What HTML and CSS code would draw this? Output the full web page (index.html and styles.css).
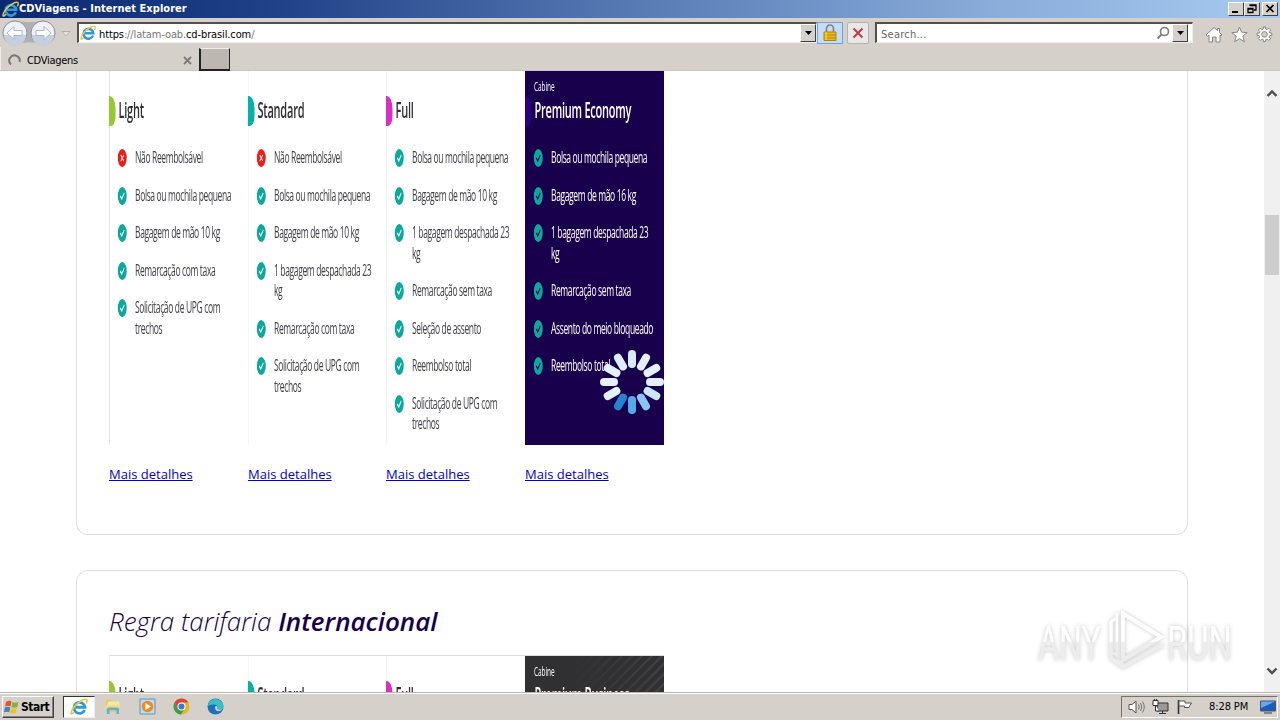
FILE: index.html
```
<!DOCTYPE html>
<html lang="pt-BR">
<head>
<meta charset="utf-8">
<title>CDViagens - Internet Explorer</title>
<link rel="stylesheet" href="styles.css">
</head>
<body>
<svg class="defs" width="0" height="0">
  <defs>
    <symbol id="ie" viewBox="0 0 16 16">
      <path d="M13 10.600A4.900 4.900 0 1 1 13.300 8.200H5" fill="none" stroke="#2d9ad8" stroke-width="2.500"/>
      <path d="M3.500 12.500C.7 16.200 0 13.400 2.600 9.300 5.800 4.300 12.400.4 14.600 1.300c1.200.6.5 2.600-.1 3.700" fill="none" stroke="#f0c545" stroke-width="1.400"/>
    </symbol>
    <symbol id="ok" viewBox="0 0 18 18"><circle cx="9" cy="9" r="9" fill="#0aa99d"/><path d="M5 9l3 3 5-6" fill="none" stroke="currentColor" stroke-width="1.8"/></symbol>
    <symbol id="no" viewBox="0 0 18 18"><circle cx="9" cy="9" r="9" fill="#ec1c16"/><path d="M6 6l6 6M12 6l-6 6" fill="none" stroke="#fff" stroke-width="1.5"/></symbol>
  </defs>
</svg>
<div class="window">
  <header class="titlebar">
    <svg class="title-icon" width="17" height="17"><use href="#ie"/></svg>
    <span class="title-text">CDViagens - Internet Explorer</span>
    <div class="window-buttons">
      <span class="winbtn"><svg width="14" height="12"><path d="M3 9h6" stroke="#000" stroke-width="2"/></svg></span>
      <span class="winbtn"><svg width="14" height="12"><path d="M5 3V2h6v5H9M5 2.5h6M3 5.500h5v4H3zM3 6h5" fill="none" stroke="#000" stroke-width="1.3"/></svg></span>
      <span class="winbtn close"><svg width="14" height="12"><path d="M3.500 2l7 7M10.500 2l-7 7" stroke="#000" stroke-width="1.7"/></svg></span>
    </div>
  </header>

  <div class="toolbar">
    <svg class="nav" width="72" height="29" viewBox="0 0 72 29">
      <path d="M15 2.500Q29 6 43 2.500a12 12 0 0 1 0 25Q29 21 15 27.500a12 12 0 0 1 0-25" fill="#aeb0b2"/>
      <circle cx="15" cy="15" r="12" fill="#eef1f5" stroke="#8f959b"/><circle cx="43" cy="15" r="12" fill="#eef1f5" stroke="#8f959b"/>
      <path d="M4 17a11 11 0 0 0 22 0zM32 17a11 11 0 0 0 22 0z" fill="#c4cfdf"/>
      <path d="M7 15l7-6.500v4h8v5h-8v4zM51 15l-7-6.500v4h-8v5h8v4z" fill="#fff" stroke="#a9b8ce"/>
      <path d="M62 13.500h8l-4 4.500z" fill="#e6e1dc" stroke="#b5afa9"/>
    </svg>
    <div class="field address">
      <svg width="16" height="16"><use href="#ie"/></svg>
      <span class="url">https<i>://latam-oab.</i>cd-brasil.com<i>/</i></span>
      <span class="drop"><svg width="9" height="5"><path d="M1 0h7L4.500 4z"/></svg></span>
    </div>
    <span class="tool lock"><svg width="14" height="18" viewBox="0 0 14 18"><path d="M3.500 8V4.500a3.500 3.500 0 0 1 7 0V8" fill="none" stroke="#8a8370" stroke-width="1.700"/><path d="M1 8h12v8.500H1z" fill="#e9b60c" stroke="#ad8414"/><path d="M1 11h12M1 14h12" stroke="#c28b08"/><path d="M3 8v8" stroke="#ffe36b"/></svg></span>
    <span class="tool stop"><svg width="12" height="12"><path d="M1.500 1.500l9 9M10.500 1.500l-9 9" stroke="#c2383c" stroke-width="1.900"/></svg></span>
    <div class="field search">
      <span class="placeholder">Search...</span>
      <svg class="lens" width="14" height="14"><circle cx="8.500" cy="5.500" r="4" fill="none" stroke="#7b7b7b" stroke-width="1.600"/><path d="M5.500 8.500L1.500 12.500" stroke="#7b7b7b" stroke-width="2"/></svg>
      <span class="drop"><svg width="9" height="5"><path d="M1 0h7L4.500 4z"/></svg></span>
    </div>
    <div class="commands">
      <svg width="18" height="17" viewBox="0 0 18 17"><path d="M1 9l8-7.500 3.500 3V2.500h2v4L17 9l-1 1-1-.8V16h-4v-5H7.500v5H4V9.200l-1.500 1z" fill="#fff" stroke="#888583"/></svg>
      <svg width="17" height="17" viewBox="0 0 17 17"><path d="M8.500 1l2.100 5.200 5.600.4-4.300 3.600 1.400 5.500-4.800-3-4.800 3 1.400-5.500L.8 6.600l5.600-.4z" fill="#fff" stroke="#888583"/></svg>
      <svg width="17" height="17" viewBox="0 0 17 17"><path d="M7.300 1h2.400v2l1.500.6 1.500-1.500 2 2-1.500 1.500.6 1.400h2v2.600h-2l-.6 1.400 1.500 1.500-2 2-1.500-1.500-1.500.6v2H7.300v-2l-1.500-.6-1.500 1.500-2-2L3.800 11l-.6-1.400h-2V7h2l.6-1.400-1.500-1.500 2-2 1.500 1.500L7.300 3z" fill="#fff" stroke="#888583"/><circle cx="8.500" cy="8.400" r="2.800" fill="#d6d0ca" stroke="#888583"/></svg>
    </div>
  </div>

  <div class="tabs">
    <div class="tab">
      <svg width="14" height="14"><path d="M3 11.500A5.200 5.200 0 1 1 11.500 9" fill="none" stroke="#797674" stroke-width="2"/></svg>
      <span class="tab-text">CDViagens</span>
      <svg class="tab-close" width="9" height="9"><path d="M1 1l7 7M8 1l-7 7" stroke="#7e7a77" stroke-width="1.800"/></svg>
    </div>
    <span class="newtab"></span>
  </div>

  <div class="viewport">
    <main class="page">
      <section class="panel domestic">
        <div class="fares">
          <div class="fare">
            <div class="card"><div class="art green">
              <h3>Light</h3>
              <ul>
                <li><svg><use href="#no"/></svg><span>Não Reembolsável</span></li>
                <li><svg><use href="#ok"/></svg><span>Bolsa ou mochila pequena</span></li>
                <li><svg><use href="#ok"/></svg><span>Bagagem de mão 10 kg</span></li>
                <li><svg><use href="#ok"/></svg><span>Remarcação com taxa</span></li>
                <li><svg><use href="#ok"/></svg><span>Solicitação de UPG com<br>trechos</span></li>
              </ul>
            </div></div>
            <a href="#">Mais detalhes</a>
          </div>
          <div class="fare">
            <div class="card"><div class="art teal">
              <h3>Standard</h3>
              <ul>
                <li><svg><use href="#no"/></svg><span>Não Reembolsável</span></li>
                <li><svg><use href="#ok"/></svg><span>Bolsa ou mochila pequena</span></li>
                <li><svg><use href="#ok"/></svg><span>Bagagem de mão 10 kg</span></li>
                <li><svg><use href="#ok"/></svg><span>1 bagagem despachada 23<br>kg</span></li>
                <li><svg><use href="#ok"/></svg><span>Remarcação com taxa</span></li>
                <li><svg><use href="#ok"/></svg><span>Solicitação de UPG com<br>trechos</span></li>
              </ul>
            </div></div>
            <a href="#">Mais detalhes</a>
          </div>
          <div class="fare">
            <div class="card"><div class="art pink">
              <h3>Full</h3>
              <ul>
                <li><svg><use href="#ok"/></svg><span>Bolsa ou mochila pequena</span></li>
                <li><svg><use href="#ok"/></svg><span>Bagagem de mão 10 kg</span></li>
                <li><svg><use href="#ok"/></svg><span>1 bagagem despachada 23<br>kg</span></li>
                <li><svg><use href="#ok"/></svg><span>Remarcação sem taxa</span></li>
                <li><svg><use href="#ok"/></svg><span>Seleção de assento</span></li>
                <li><svg><use href="#ok"/></svg><span>Reembolso total</span></li>
                <li><svg><use href="#ok"/></svg><span>Solicitação de UPG com<br>trechos</span></li>
              </ul>
            </div></div>
            <a href="#">Mais detalhes</a>
          </div>
          <div class="fare">
            <div class="card premium"><div class="art indigo">
              <p class="cabin">Cabine</p>
              <h3>Premium Economy</h3>
              <ul>
                <li><svg><use href="#ok"/></svg><span>Bolsa ou mochila pequena</span></li>
                <li><svg><use href="#ok"/></svg><span>Bagagem de mão 16 kg</span></li>
                <li><svg><use href="#ok"/></svg><span>1 bagagem despachada 23<br>kg</span></li>
                <li><svg><use href="#ok"/></svg><span>Remarcação sem taxa</span></li>
                <li><svg><use href="#ok"/></svg><span>Assento do meio bloqueado</span></li>
                <li><svg><use href="#ok"/></svg><span>Reembolso total</span></li>
              </ul>
            </div></div>
            <a href="#">Mais detalhes</a>
          </div>
        </div>
      </section>

      <section class="panel international">
        <h2>Regra tarifaria <b>Internacional</b></h2>
        <div class="fares">
          <div class="fare"><div class="card"><div class="art green"><h3>Light</h3></div></div></div>
          <div class="fare"><div class="card"><div class="art teal"><h3>Standard</h3></div></div></div>
          <div class="fare"><div class="card"><div class="art pink"><h3>Full</h3></div></div></div>
          <div class="fare"><div class="card business"><div class="art"><p class="cabin">Cabine</p><h3>Premium Business</h3></div></div></div>
        </div>
      </section>
    </main>
    <aside class="scrollbar">
      <svg width="12" height="9"><path d="M1.500 7L6 2.500l4.500 4.500" fill="none" stroke="#4c4c4c" stroke-width="2.400"/></svg>
      <span class="thumb"></span>
      <svg class="down" width="12" height="9"><path d="M1.500 1.500L6 6l4.500-4.500" fill="none" stroke="#4c4c4c" stroke-width="2.400"/></svg>
    </aside>
  </div>

  <footer class="taskbar">
    <button class="start">
      <svg width="16" height="16" viewBox="0 0 16 16"><path d="M2 3q3-2 5.500-.5L6.500 7.500Q4 6 1 7.500z" fill="#e6532a"/><path d="M8.500 3q3 1.500 6 0l-1.200 5q-3 1.300-5.800 0z" fill="#7eb43a"/><path d="M.8 8.500q3-1.500 5.500 0L5.300 13.300Q3 12 0 13.300z" fill="#3c82c9"/><path d="M7.200 9q3 1.300 5.800 0l-1.200 5q-3 1.200-5.700-.2z" fill="#f3bd28"/></svg>
      <span>Start</span>
    </button>
    <div class="apps">
      <span class="app active"><svg width="18" height="18"><use href="#ie"/></svg></span>
      <span class="app"><svg width="18" height="17" viewBox="0 0 18 17"><path d="M2 2h6l1 2h6v10H2z" fill="#e7c765"/><path d="M4 3.500h11l1 5H3z" fill="#f8e7a3"/><path d="M1.500 7.500h14V11h-14z" fill="#f3d980"/><path d="M3 16v-5q0-1.500 2-1.500h8q2 0 2 1.500v5h-2.500v-4h-7v4z" fill="#5eb0d4"/></svg></span>
      <span class="app"><svg width="17" height="17" viewBox="0 0 17 17"><path d="M1 1h15v15H1z" fill="#b9dcf2" stroke="#5b97bd"/><circle cx="8.500" cy="8.500" r="5.800" fill="#f28a1c"/><path d="M6.500 5l5.500 3.500L6.500 12z" fill="#fff"/></svg></span>
      <span class="app"><svg width="17" height="17" viewBox="0 0 17 17"><circle cx="8.500" cy="8.500" r="8" fill="#e8b71c"/><path d="M1.600 4.500A8 8 0 0 1 15.400 4.500H8.500L5 10.500z" fill="#dd4337"/><path d="M1.600 4.500A8 8 0 0 0 8 16.500L11.800 10.500H5z" fill="#3a9c4c"/><circle cx="8.500" cy="8.500" r="4" fill="#fff"/><circle cx="8.500" cy="8.500" r="3" fill="#3d78d8"/></svg></span>
      <span class="app"><svg width="17" height="17" viewBox="0 0 17 17"><circle cx="8.500" cy="8.500" r="8" fill="#1b70c0"/><path d="M.6 8A8 8 0 0 1 16.500 8q0 3.500-4 3.500-3 0-2-2 0-3-4-3T.6 8" fill="#37bfc4"/><path d="M10.500 9.500q-1 2 2 2 2 0 3-1-1 2-3.500 2.700Q8 13 8 9.500q0-2 1.500-1.500 1 .5 1 1.500" fill="#d6d0c8"/></svg></span>
    </div>
    <div class="tray">
      <svg width="18" height="16" viewBox="0 0 18 16"><path d="M1 5.500h3L8 2v12l-4-3.500H1z" fill="#fff" stroke="#55524f"/><path d="M10.500 5.500q1.500 2.500 0 5M12.500 4q2.500 4 0 8M14.500 2.500q3.500 5.500 0 11" fill="none" stroke="#777370"/></svg>
      <svg width="18" height="16" viewBox="0 0 18 16"><path d="M5 4h11v8H5z" fill="#9a9a9a" stroke="#33302e"/><path d="M7 14.500h7M10.500 12v3" stroke="#33302e"/><path d="M1 1.500h5v5H1zM3.500 6.500v5.500H7M2.500 0v2M4.500 0v2" fill="#fff" stroke="#33302e"/></svg>
      <svg width="18" height="16" viewBox="0 0 18 16"><path d="M2.500 1v14" stroke="#33302e" stroke-width="1.600"/><path d="M3 2h6v2h6.500q-2 2.500-2.500 4.500H8.500V7H3z" fill="#fff" stroke="#55524f"/></svg>
      <span class="clock">8:28 PM</span>
      <svg width="16" height="14" viewBox="0 0 16 14"><path d="M.5 1h15v10H.5z" fill="#1b5cb8" stroke="#44566c"/><path d="M1 1.500h14L1 8z" fill="#68a9ea"/><path d="M4 13h8" stroke="#656a72" stroke-width="1.500"/></svg>
    </div>
  </footer>

  <svg class="spinner" viewBox="-32 -32 64 64" stroke-width="8" stroke-linecap="round">
    <path d="M0-18V-28" stroke="#d9ecff"/>
    <path d="M0-18V-28" stroke="#e3f1ff" transform="rotate(30)"/>
    <path d="M0-18V-28" stroke="#e3f1ff" transform="rotate(60)"/>
    <path d="M0-18V-28" stroke="#e0f0ff" transform="rotate(90)"/>
    <path d="M0-18V-28" stroke="#cbe7fd" transform="rotate(120)"/>
    <path d="M0-18V-28" stroke="#8bc4f1" transform="rotate(150)"/>
    <path d="M0-18V-28" stroke="#55a9e8" transform="rotate(180)"/>
    <path d="M0-18V-28" stroke="#2384d2" transform="rotate(210)"/>
    <path d="M0-18V-28" stroke="#e3f1ff" transform="rotate(240)"/>
    <path d="M0-18V-28" stroke="#e3f1ff" transform="rotate(270)"/>
    <path d="M0-18V-28" stroke="#e3f1ff" transform="rotate(300)"/>
    <path d="M0-18V-28" stroke="#dceeff" transform="rotate(330)"/>
  </svg>

  <svg class="watermark" viewBox="0 0 204 70">
    <defs><linearGradient id="wm" gradientUnits="userSpaceOnUse" x1="0" y1="0" x2="0" y2="70"><stop offset=".52" stop-color="#fff"/><stop offset=".53" stop-color="#ededed"/></linearGradient></defs>
    <text x="5" y="55" textLength="63" lengthAdjust="spacingAndGlyphs" fill="url(#wm)">ANY</text>
    <text x="134" y="55" textLength="65" lengthAdjust="spacingAndGlyphs" fill="url(#wm)">RUN</text>
    <path d="M83 13l-5 4v36l12 9 38-22" fill="none" stroke="url(#wm)" stroke-width="3.500"/>
    <path d="M84 8v42l-6-3M84 54l8 7 39-21" fill="none" stroke="url(#wm)" stroke-width="2.500"/>
    <path d="M90 8.500l38 23.500-38 23z" fill="none" stroke="url(#wm)" stroke-width="4"/>
  </svg>
</div>
</body>
</html>
```
FILE: styles.css
```
* { box-sizing: border-box; }
body { margin: 0; overflow: hidden; font-family: "DejaVu Sans Condensed", "DejaVu Sans", sans-serif; font-size: 11px; color: #000; }
svg { display: block; flex: none; }
.defs { position: absolute; }
.window { position: relative; width: 1280px; height: 720px; display: flex; flex-direction: column; background: #d6d0ca; overflow: hidden; }

.titlebar { height: 18px; display: flex; align-items: center; padding: 0 2px; background: linear-gradient(90deg, #0c2870, #1c3f85 20%, #5b80b8 52%, #8aadda 78%, #a6caf0); }
.title-text { margin-left: 0; color: #fff; font-weight: bold; font-size: 11px; line-height: 18px; white-space: nowrap; letter-spacing: .04px; }
.window-buttons { margin-left: auto; display: flex; }
.winbtn { width: 16px; height: 14px; background: #d6d0ca; border: 1px solid; border-color: #fff #404040 #404040 #fff; }
.winbtn.close { margin-left: 2px; }

.toolbar { height: 29px; display: flex; align-items: center; }
.nav { align-self: flex-start; }
.field { height: 21px; display: flex; align-items: center; background: #fff; border: 2px solid; border-color: #554f49 #eee #eee #554f49; border-bottom-width: 1px; border-right-width: 1px; }
.address { width: 740px; margin-left: 5px; padding-left: 1px; }
.url { margin-left: 3px; padding-top: 2px; letter-spacing: -.12px; }
.url i { font-style: normal; color: #777; }
.drop { margin-left: auto; width: 16px; height: 18px; display: flex; align-items: center; justify-content: center; background: #d6d0ca; border: 1px solid; border-color: #fff #404040 #404040 #fff; }
.tool { height: 22px; display: flex; align-items: center; justify-content: center; border: 1px solid; }
.lock { width: 26px; background: #c4dcf7; border-color: #6ca5dd; }
.stop { width: 22px; margin-left: 4px; background: #e9e7e8; border-color: #b5b2b0; border-radius: 2px; }
.search { width: 318px; margin-left: 6px; padding-right: 4px; }
.placeholder { margin-left: 4px; padding-top: 2px; color: #666; letter-spacing: .25px; }
.lens { margin-left: auto; }
.lens + .drop { margin-left: 2px; }
.commands { display: flex; align-items: center; gap: 8px; margin-left: 12px; padding-top: 4px; }

.tabs { height: 24px; display: flex; border-bottom: 1px solid #cbc5be; }
.tab { width: 199px; display: flex; align-items: center; padding: 3px 7px 0 7px; border-left: 1px solid #eee; }
.tab-text { margin-left: 5px; letter-spacing: -.3px; }
.tab-close { margin-left: auto; }
.newtab { width: 31px; height: 23px; margin-top: 1px; background: #bdb7b1; border: 1px solid #222; border-top-color: #eee; border-left-width: 2px; border-bottom-width: 2px; }

.viewport { height: 621px; display: flex; background: #fff; overflow: hidden; }
.page { width: 1264px; height: 621px; padding-left: 76px; overflow: hidden; font-family: "Open Sans", sans-serif; }
.panel { width: 1112px; padding-left: 32px; border: 1px solid #dfdfdf; border-radius: 12px; }
.domestic { height: 464px; border-top: 0; border-top-left-radius: 0; border-top-right-radius: 0; }
.international { height: 400px; margin-top: 35px; padding-top: 31px; }
.fares { display: grid; grid-template-columns: 139px 138px 139px 139px; }
.card { width: 139px; height: 374px; overflow: hidden; box-shadow: inset 1px 0 #f5f5f5; }
.domestic .fare:first-child .card { box-shadow: inset 1px 0 #e4e4e4; }
.art { width: 278px; height: 100%; transform: scaleX(.5); transform-origin: 0 0; padding-top: 25px; color: #3e3e46; }
.art h3 { position: relative; margin: 0; height: 30px; padding-left: 19px; font-size: 22px; line-height: 26px; font-weight: 600; letter-spacing: -.45px; color: #303035; white-space: nowrap; }
.art h3::before { content: ""; position: absolute; left: 0; top: 0; width: 13px; height: 30px; border-radius: 0 12px 9px 0; background: var(--tag, transparent); }
.green { --tag: #95c832; }
.teal { --tag: #06b1a7; }
.pink { --tag: #d72fc0; }
.indigo { --tag: #290082; }
.art ul { list-style: none; margin: 0; padding: 21px 0 0 17px; }
.art li { display: flex; gap: 16px; margin-bottom: 17px; font-size: 17px; line-height: 20.500px; letter-spacing: -.72px; white-space: nowrap; }
.art li svg { width: 19px; height: 18px; margin-top: 2px; color: #fff; }
.art .cabin { margin: 0; height: 18px; padding-left: 18px; font-size: 13px; line-height: 17px; letter-spacing: -.1px; }
.premium, .business { box-shadow: none; }
.premium { background: #18004c; }
.business { background: linear-gradient(90deg, #303033 35%, transparent), repeating-linear-gradient(135deg, #303033 0 4px, #414145 5px 7px); }
.premium .art, .business .art, .premium h3, .business h3 { color: #fff; }
.premium .art, .business .art { padding-top: 7px; }
.premium .art li svg { color: #18004c; }
.fare a { display: block; margin-top: 19px; font-size: 13px; line-height: 20px; color: #0000c8; text-decoration: underline; }
h2 { width: 555px; height: 54px; margin: 0; border-bottom: 1px solid #dcdcdc; font-size: 26px; line-height: 38px; font-weight: 300; font-style: italic; color: #18004c; white-space: nowrap; }
h2 b { font-weight: 600; }

.scrollbar { width: 16px; height: 621px; padding: 18px 1px 16px; background: #f0f0f0; display: flex; flex-direction: column; align-items: center; }
.thumb { width: 14px; height: 60px; margin-top: 117px; background: #cdcdcd; }
.down { margin-top: auto; }

.taskbar { height: 28px; display: flex; align-items: center; border-top: 1px solid #bbb5a9; box-shadow: inset 0 1px #fff; padding: 0 2px; }
.start { width: 52px; height: 22px; display: flex; align-items: center; gap: 1px; padding: 0 1px; background: #d6d0ca; border: 1px solid; border-color: #fff #404040 #404040 #fff; box-shadow: inset -1px -1px #88827c; font: bold 12px "DejaVu Sans Condensed", "DejaVu Sans", sans-serif; color: #000; letter-spacing: -.5px; }
.apps { display: flex; gap: 2px; margin-left: 9px; }
.app { width: 32px; height: 22px; display: flex; align-items: center; justify-content: center; }
.app.active { background: #fff; border: 1px solid #333; border-right-color: #eee; border-bottom-color: #eee; }
.tray { width: 157px; height: 22px; margin-left: auto; display: flex; align-items: center; padding-left: 6px; gap: 6px; border: 1px solid; border-color: #77716b #fff #fff #77716b; }
.clock { width: 41px; margin: 0 4px 0 9px; white-space: nowrap; letter-spacing: -.1px; }

.spinner { position: absolute; left: 600px; top: 350px; width: 64px; height: 64px; }
.watermark { position: absolute; left: 1033px; top: 605px; width: 204px; height: 70px; filter: drop-shadow(0 0 2px rgba(0,0,0,.22)); font-family: Roboto, sans-serif; font-size: 49px; font-weight: 400; }
```
